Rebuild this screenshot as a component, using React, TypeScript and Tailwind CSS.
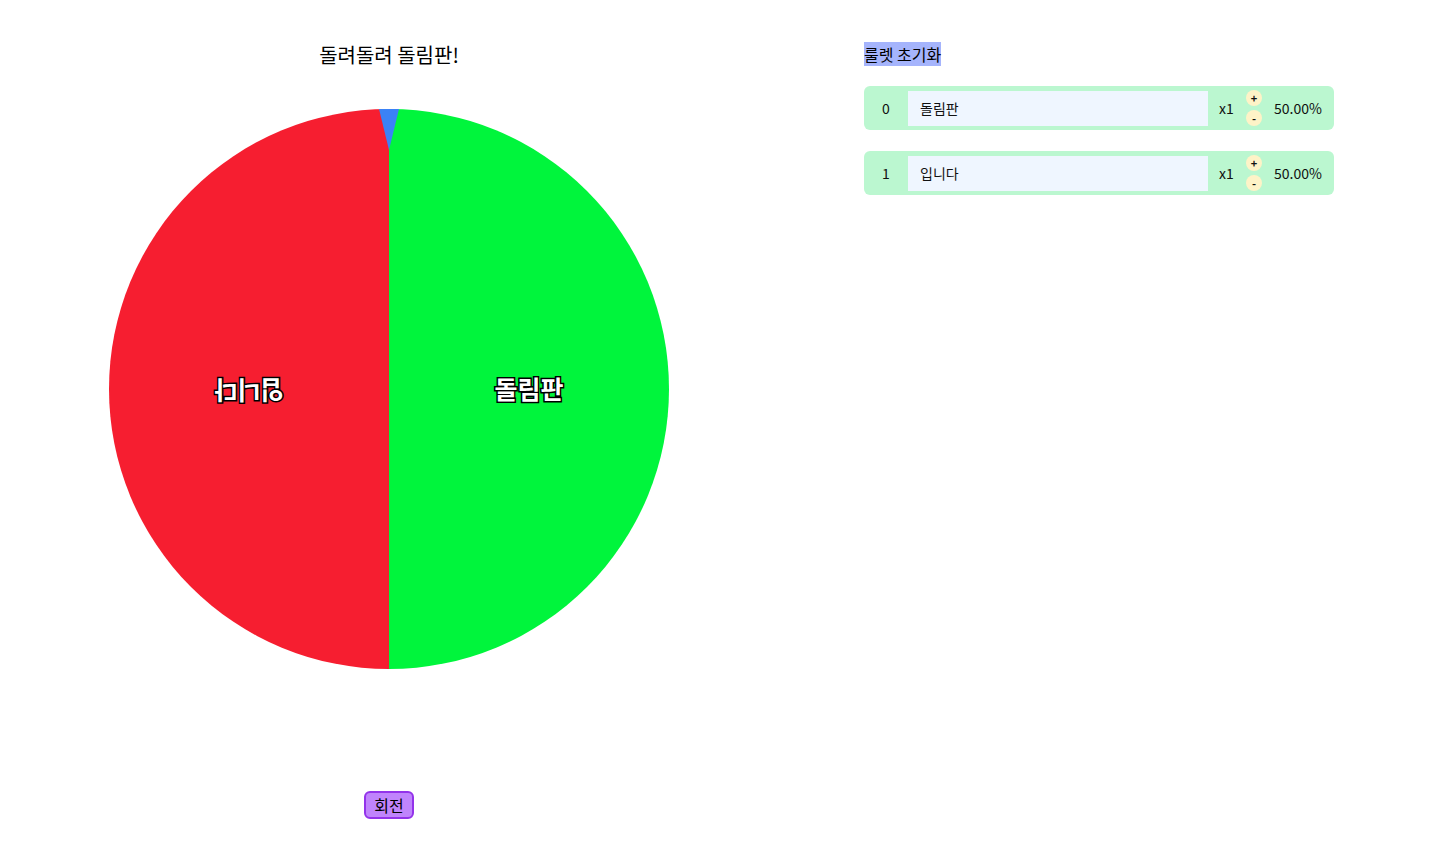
import React from "react";

const font = { fontFamily: '"Noto Sans CJK KR", "Noto Sans", sans-serif' };

function Wheel() {
  return (
    <svg width="560" height="560" viewBox="109 109 560 560" className="block">
      <path d="M389 389 L389 109 A280 280 0 0 0 389 669 Z" fill="#f61e30" />
      <path d="M389 389 L389 109 A280 280 0 0 1 389 669 Z" fill="#00f53c" />
      <text
        x="529"
        y="399"
        textAnchor="middle"
        fontSize="25"
        fontWeight="700"
        fill="#ffffff"
        stroke="#000000"
        strokeWidth="3"
        paintOrder="stroke"
        style={font}
      >
        돌림판
      </text>
      <g transform="rotate(180 249 390)">
        <text
          x="249"
          y="399"
          textAnchor="middle"
          fontSize="25"
          fontWeight="700"
          fill="#ffffff"
          stroke="#000000"
          strokeWidth="3"
          paintOrder="stroke"
          style={font}
        >
          입니다
        </text>
      </g>
      <polygon points="379,109 399,109 389,150" fill="#3b82f6" />
    </svg>
  );
}

function Row({ idx, name }: { idx: number; name: string }) {
  return (
    <div className="flex h-[44px] w-[470px] items-center rounded-md bg-[#bbf7d0] text-[14px] text-[#111]">
      <div className="w-[44px] text-center">{idx}</div>
      <div className="flex h-[35px] w-[300px] items-center bg-[#eff6ff] px-[12px]">{name}</div>
      <div className="ml-[11px] w-[15px]">x1</div>
      <div className="ml-[12px] flex w-[16px] flex-col items-center gap-[4px]">
        <div className="flex h-[16px] w-[16px] items-center justify-center rounded-full bg-[#fef3c7] text-[11px] font-bold leading-none">+</div>
        <div className="flex h-[16px] w-[16px] items-center justify-center rounded-full bg-[#fef3c7] text-[11px] font-bold leading-none">-</div>
      </div>
      <div className="ml-[12px]">50.00%</div>
    </div>
  );
}

export default function App() {
  return (
    <div className="flex min-h-[844px] w-[1456px] bg-white text-black" style={font}>
      <div className="flex w-[778px] flex-col items-center pt-[41px]">
        <div className="text-[20px] leading-[28px]">돌려돌려 돌림판!</div>
        <div className="mt-[40px]">
          <Wheel />
        </div>
        <button className="mt-[122px] h-[28px] w-[50px] rounded-md border-2 border-[#9333ea] bg-[#c084fc] text-[16px] leading-none">
          회전
        </button>
      </div>
      <div className="ml-[86px] flex flex-col pt-[42px]">
        <div className="flex">
          <div className="h-[24px] bg-[#a5b4fc] text-[16px] leading-[24px]">룰렛 초기화</div>
        </div>
        <div className="mt-[20px] flex flex-col gap-[21px]">
          <Row idx={0} name="돌림판" />
          <Row idx={1} name="입니다" />
        </div>
      </div>
    </div>
  );
}
